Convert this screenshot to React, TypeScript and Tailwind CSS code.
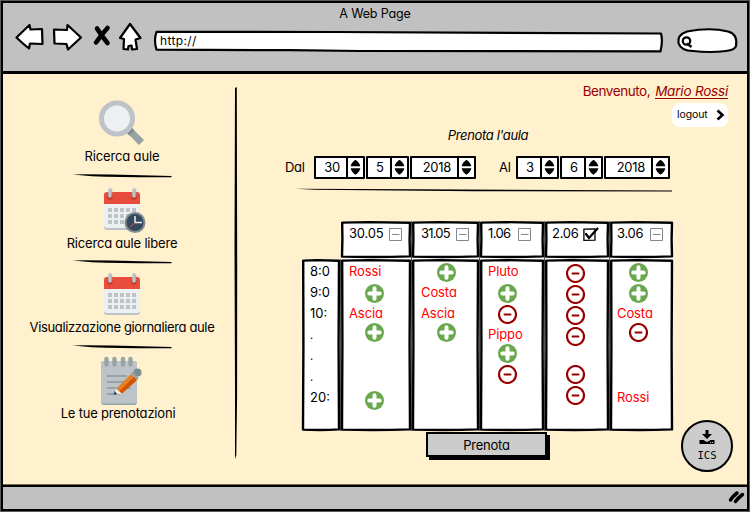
import type { ReactNode } from "react";

type Entry = "plus" | "minus" | string | null;

const cx = (...parts: (string | undefined)[]) => parts.filter(Boolean).join(" ");

/* Hand-drawn outline stretched over its parent box */
function Outline({ w, h }: { w: number; h: number }) {
  return (
    <svg className="pointer-events-none absolute inset-0 overflow-visible" width={w} height={h} viewBox={`0 0 ${w} ${h}`} fill="none">
      <path
        d={`M1.2 1.6 L${w * 0.4} 1.1 L${w - 1} 1.8 L${w - 1.4} ${h * 0.5} L${w - 1} ${h - 1.6} Q${w / 2} ${h - 0.4} 1 ${h - 1.4} L1.4 ${h * 0.5} Z`}
        stroke="#000"
        strokeWidth="2.4"
        strokeLinejoin="round"
      />
    </svg>
  );
}

function Plus() {
  return (
    <svg width="19" height="19" viewBox="0 0 19 19">
      <circle cx="9.5" cy="9.5" r="9.5" fill="#6aa84f" />
      <path d="M9.5 4.300V14.700M4.300 9.500H14.700" stroke="#fff" strokeWidth="4" strokeLinecap="round" />
    </svg>
  );
}

function Minus() {
  return (
    <svg width="19" height="19" viewBox="0 0 19 19">
      <circle cx="9.5" cy="9.5" r="8.5" fill="none" stroke="#990000" strokeWidth="2.200" />
      <path d="M6.500 9.600H12.500" stroke="#990000" strokeWidth="2" strokeLinecap="round" />
    </svg>
  );
}

function Toggle({ checked }: { checked?: boolean }) {
  if (checked)
    return (
      <svg className="overflow-visible" width="13" height="13" viewBox="0 0 13 13" fill="none" stroke="#000">
        <path d="M.9 1.2L12 .8V12.200L.9 12.400Z" strokeWidth="1.3" />
        <path d="M3 6L6 10L14.500 .5" strokeWidth="2.200" strokeLinecap="round" />
      </svg>
    );
  return (
    <svg width="13" height="13" viewBox="0 0 13 13" fill="none" stroke="#85858f">
      <path d="M.5 .5H12.500V12.500H.5ZM3 6.500H10.500" />
    </svg>
  );
}

function Spinner({ value, width, inner }: { value: string; width: string; inner?: string }) {
  return (
    <div className={cx("flex h-[23px] rounded-[1px] border-2 border-black bg-white", width)}>
      <div className="flex flex-1 items-center justify-end border-r-2 border-black pr-[6px] text-[13px]">
        <span className={inner}>{value}</span>
      </div>
      <svg className="mx-[2px] mt-px" width="11" height="17" viewBox="0 0 11 17">
        <path d="M5.500 .8C7 1.600 10 4.500 10.300 7.300H.7C1 4.500 4 1.600 5.500 .8ZM.7 9.300H10.300C10 12 7 15 5.500 15.800C4 15 1 12 .7 9.300Z" />
      </svg>
    </div>
  );
}

function Rule() {
  return (
    <svg className="shrink-0" width="100" height="6" viewBox="0 0 100 6">
      <path d="M.5 1.500Q10 1 50 1.800L99.500 3V4.200Q50 4.400 20 3.200Z" />
    </svg>
  );
}

function CalendarArt() {
  return (
    <>
      <path d="M104 7H140V39Q140 42 137 42H107Q104 42 104 39Z" fill="#bdc3c7" />
      <path d="M104 7H140V37Q140 40 137 40H107Q104 40 104 37Z" fill="#ecf0f1" />
      <path d="M104 16V7Q104 4 107 4H137Q140 4 140 7V16Z" fill="#e74c3c" />
      <circle cx="110" cy="9" r="2.700" fill="#c0392b" />
      <circle cx="134" cy="9" r="2.700" fill="#c0392b" />
      <path d="M110 1.800V8M134 1.800V8" stroke="#bdc3c7" strokeWidth="3.600" strokeLinecap="round" />
      <path d="M111.800 1.500V8M135.800 1.500V8" stroke="#95a5a6" strokeWidth=".7" />
      <path d="M108 22H137M108 28H137M108 34H137" stroke="#bdc3c7" strokeWidth="4" strokeDasharray="4 2" />
    </>
  );
}

function NavItem({ icon, children, className, label }: { icon: ReactNode; children: ReactNode; className: string; label: string }) {
  return (
    <div className={cx("flex w-full flex-col items-center", className)}>
      {icon}
      <span className={cx("h-4 whitespace-nowrap text-[13px] leading-4", label)}>{children}</span>
    </div>
  );
}

const days: { date: string; w: number; col: string; cell: string; icon: string; checked?: boolean; label: string; entries: [Entry, string?][] }[] = [
  {
    date: "30.05", w: 70, col: "w-[70px]", cell: "pl-[8px]", icon: "ml-[16px]", label: "w-[40px] tracking-[-0.2px]",
    entries: [["Rossi"], ["plus", "translate-y-px"], ["Ascia"], ["plus", "-translate-y-[2px]"], [null], [null], ["plus", "translate-y-[3px]"]],
  },
  {
    date: "31.05", w: 67, col: "w-[67px]", cell: "pl-[9px]", icon: "ml-[16px]", label: "w-[35px] tracking-[-0.8px]",
    entries: [["plus", "translate-y-px"], ["Costa"], ["Ascia"], ["plus", "-translate-y-[2px]"], [null], [null], [null]],
  },
  {
    date: "1.06", w: 64, col: "w-[64px]", cell: "pl-[8px]", icon: "ml-[10px]", label: "w-[30px] tracking-[-0.6px]",
    entries: [["Pluto"], ["plus", "translate-y-px"], ["minus", "translate-y-px"], ["Pippo"], ["plus", "-translate-y-[2px]"], ["minus", "-translate-y-[2px]"], [null]],
  },
  {
    date: "2.06", w: 64, col: "w-[64px]", cell: "pl-[7px]", icon: "ml-[14px]", checked: true, label: "w-[31px] tracking-[-0.3px]",
    entries: [["minus", "translate-y-[2px]"], ["minus", "translate-y-[2px]"], ["minus", "translate-y-[2px]"], ["minus", "translate-y-[2px]"], [null], ["minus", "-translate-y-[2px]"], ["minus", "-translate-y-[2px]"]],
  },
  {
    date: "3.06", w: 63, col: "w-[63px]", cell: "pl-[7px]", icon: "ml-[12px]", label: "w-[33px] tracking-[-0.3px]",
    entries: [["plus", "translate-y-px"], ["plus", "translate-y-px"], ["Costa"], ["minus", "-translate-y-[2px]"], [null], [null], ["Rossi"]],
  },
];

export default function App() {
  return (
    <div className="flex h-[512px] w-[750px] flex-col overflow-hidden bg-[#555b55] px-px pb-px pt-px text-black [font-family:Inter,'Liberation_Sans',sans-serif] [font-feature-settings:'cv11']">
      <div className="flex min-h-0 flex-1 flex-col border-2 border-black bg-[#fff0ce]">
        <header className="flex h-[71px] shrink-0 flex-col border-b-[3px] border-black bg-[#c1c1c1]">
          <div className="h-[19px] text-center text-[12.500px] leading-[21px] tracking-[-0.15px]">A Web Page</div>
          <div className="flex h-[36px] pl-[12px]">
            <svg width="130" height="36" viewBox="15 22 130 36" fill="#fff" stroke="#000" strokeWidth="2.200" strokeLinejoin="round">
              <path d="M16.500 37.500L29.500 25L30.500 29.500L42 29L42.500 44L30 43.500L29 48.500Q22 43 16.500 37.500Z" />
              <path d="M54 29.500L67 30L67.500 25L81 37.500L68 49.500L66.500 44L54.500 43.500Z" />
              <path d="M120 38L130 24L140.500 38L135.500 39.500L137 49L132 49.500L131.500 45.500L128.500 46L128 49.500L123.500 49L124 39Z" />
              <path d="M97 28.500Q101 35 107.500 43M107.500 28Q103 33 96 42.500" fill="none" strokeWidth="4.600" strokeLinecap="round" />
            </svg>
            <div className="relative ml-[9px] mt-[8px] flex h-[21px] w-[508px]">
              <svg className="absolute inset-0 overflow-visible" width="508" height="21" viewBox="154 30 508 21" fill="#fff" stroke="#000" strokeWidth="2.200" strokeLinejoin="round">
                <path d="M156.500 31.800L335 32L661 33.500Q663 41 660.500 51.300L360 51L290 50.200L156.500 49.700Q153.500 40 156.500 31.800Z" />
              </svg>
              <span className="relative pl-[6px] text-[12px] leading-[21px] tracking-[0.35px]">http://</span>
            </div>
            <svg className="ml-[13px]" width="66" height="36" viewBox="675 22 66 36" fill="#fff" stroke="#000" strokeWidth="2.200">
              <path d="M678.500 43Q677 35 687 31.500Q710 27 728 31.500Q738 34 736 46Q735 50 726 51Q710 53 693 51Q681 51 678.500 43Z" />
              <circle cx="686.500" cy="41" r="3.700" fill="none" />
              <path d="M687 43.500L691.500 47" strokeWidth="2.500" />
            </svg>
          </div>
        </header>

        <main className="relative flex min-h-0 flex-1 border-b border-[#7b6c46]">
          <aside className="flex w-[238px] shrink-0 flex-col items-center pt-[25px]">
            <NavItem
              className="h-[74px]"
              label="tracking-[-0.15px]"
              icon={
                <svg className="shrink-0" width="46" height="49" viewBox="99 100 46 49">
                  <path d="M129 131L141.500 143.500" stroke="#95a5a6" strokeWidth="7" />
                  <path d="M128 130L132 134" stroke="#7f8c8d" strokeWidth="7" />
                  <circle cx="117" cy="119.500" r="15.500" fill="#ecf0f1" stroke="#bdc3c7" strokeWidth="5" />
                </svg>
              }
            >
              Ricerca aule
            </NavItem>
            <Rule />
            <NavItem
              className="h-[80px] pt-[9px]"
              label="tracking-[-0.2px]"
              icon={
                <svg className="shrink-0" width="48" height="47" viewBox="98 0 48 47">
                  <CalendarArt />
                  <circle cx="135" cy="34.500" r="9.500" fill="#34495e" stroke="#7f8c8d" strokeWidth="2" />
                  <path d="M135 28V34.500H142" fill="none" stroke="#ecf0f1" strokeWidth="1.500" />
                  <path d="M135 34.500L130 39" stroke="#e74c3c" strokeWidth="1" />
                </svg>
              }
            >
              Ricerca aule libere
            </NavItem>
            <Rule />
            <NavItem
              className="h-[79px] pt-[8px]"
              label="tracking-[-0.36px]"
              icon={
                <svg className="shrink-0" width="48" height="46" viewBox="98 0 48 46">
                  <CalendarArt />
                </svg>
              }
            >
              Visualizzazione giornaliera aule
            </NavItem>
            <Rule />
            <NavItem
              className="pt-[5px]"
              label="-translate-x-[4px] tracking-[-0.2px]"
              icon={
                <svg className="shrink-0" width="46" height="50" viewBox="99 355 46 50">
                  <path d="M101 364V402Q101 405 104 405H134Q137 405 137 402V364Q137 361 134 361H104Q101 361 101 364Z" fill="#95a5a6" />
                  <path d="M101 364V401Q101 403.500 104 403.500H134Q137 403.500 137 401V364Q137 361 134 361H104Q101 361 101 364Z" fill="#bdc3c7" />
                  <path d="M106.500 359V364.500M114.500 359V364.500M123 359V364.500M130.500 359V364.500" stroke="#95a5a6" strokeWidth="4.400" strokeLinecap="round" />
                  <path d="M107 376H127M107 382H124M107 388H131M107 394H120" stroke="#95a5a6" strokeWidth="2" />
                  <path d="M117 388L131 374L137 380L122 393L115 394Z" fill="#e67e22" />
                  <path d="M119.500 391L134 377L137 380L122 393.500Z" fill="#d35400" />
                  <path d="M116 388.500L121.500 393.500L114 395Z" fill="#ecf0f1" />
                  <path d="M114.500 391L117.500 394.300L113.500 395Z" fill="#34495e" />
                  <circle cx="137.500" cy="372.500" r="4" fill="#7f8c8d" />
                  <path d="M131.500 372.500L138 379" stroke="#95a5a6" strokeWidth="2.500" />
                </svg>
              }
            >
              Le tue prenotazioni
            </NavItem>
          </aside>

          <svg className="-ml-[8px] mt-[13px] shrink-0" width="6" height="375" viewBox="0 0 6 375">
            <path d="M2 1L3.800 0L4.200 180L4.100 310L3.300 368L2 372L2 300L1.500 160Z" />
          </svg>

          <section className="flex min-w-0 flex-1 flex-col pl-[63px]">
            <div className="flex flex-col items-end pr-[19px] pt-[9px]">
              <div className="flex h-4 text-[13.500px] leading-4 tracking-[-0.2px] text-[#990000]">
                <span className="tracking-[-0.45px]">Benvenuto,</span>
                <span className="ml-[5px] h-[16px] border-b border-[#990000] italic">Mario Rossi</span>
              </div>
              <button className="mt-[4px] flex h-[24px] w-[56px] items-center rounded-lg bg-white pl-[5px] text-[10.500px] tracking-[-0.1px]">
                <span>logout</span>
                <svg className="ml-[8px]" width="9" height="12" viewBox="0 0 9 12" fill="none" stroke="#000" strokeWidth="2.600">
                  <path d="M1.500 1.500L6.500 6L1.500 10.500" />
                </svg>
              </button>
            </div>

            <h1 className="ml-[-7px] h-[15px] w-[386px] text-center text-[13px] italic leading-[17px] tracking-[-0.35px]">Prenota l&apos;aula</h1>

            <div className="-ml-[17px] mt-[14px] flex items-center">
              <span className="w-[29px] text-[13px] tracking-[-0.3px]">Dal</span>
              <div className="flex gap-px">
                <Spinner value="30" width="w-[51px]" inner="tracking-[-0.2px]" />
                <Spinner value="5" width="w-[43px]" />
                <Spinner value="2018" width="w-[66px]" inner="tracking-[-0.3px]" />
              </div>
              <span className="ml-[23px] w-[17px] text-[13px] tracking-[-0.3px]">Al</span>
              <div className="flex gap-px">
                <Spinner value="3" width="w-[43px]" />
                <Spinner value="6" width="w-[43px]" />
                <Spinner value="2018" width="w-[66px]" inner="tracking-[-0.3px]" />
              </div>
            </div>

            <svg className="-ml-[7px] mt-[8px]" width="378" height="6" viewBox="0 0 378 6">
              <path d="M0 1.800L120 2.200L377 3.400V4.600L180 4.200L20 2.800Z" />
            </svg>

            <div className="mt-[28px] flex">
              <div className="w-[39px]" />
              <div className="flex gap-px bg-[#555]">
                {days.map((d) => (
                  <div key={d.date} className={cx("relative h-[38px] bg-white", d.col)}>
                    <div className={cx("flex h-[24px] items-center pt-[2px] text-[13px]", d.cell)}>
                      <span className={cx("whitespace-nowrap", d.label)}>{d.date}</span>
                      <Toggle checked={d.checked} />
                    </div>
                    <Outline w={d.w} h={37} />
                  </div>
                ))}
              </div>
            </div>
            <div className="flex">
              <div className="flex gap-px bg-[#555]">
                <div className="relative h-[172px] w-[38px] bg-white pl-[8px] pt-[2px] text-[13px]">
                  {["8:0", "9:0", "10:", ".", ".", ".", "20:"].map((t, i) => (
                    <div key={i} className={t === "." ? "h-[21px] text-[11px] leading-[23px]" : "h-[21px] leading-[21px]"}>{t}</div>
                  ))}
                  <Outline w={38} h={172} />
                </div>
                {days.map((d) => (
                  <div key={d.date} className={cx("relative h-[172px] bg-white pt-[2px] text-[13px] tracking-[-0.1px] text-[#ff0000]", d.col, d.cell)}>
                    {d.entries.map(([e, shift], i) => (
                      <div key={i} className="flex h-[21px] items-center leading-[21px]">
                        {e === "plus" || e === "minus" ? <span className={cx(d.icon, shift)}>{e === "plus" ? <Plus /> : <Minus />}</span> : e}
                      </div>
                    ))}
                    <Outline w={d.w} h={172} />
                  </div>
                ))}
              </div>
            </div>
            <button className="ml-[124px] mt-px h-[25px] w-[121px] border-2 border-black bg-[#cccccc] text-[13px] leading-[23px] tracking-[-0.25px] shadow-[3px_3px_0_#000]">Prenota</button>
          </section>

          <button className="absolute bottom-[12px] right-[14px] flex size-[52px] flex-col items-center rounded-full border-2 border-black bg-[#cccccc] pt-[8px]">
            <svg width="16" height="15" viewBox="0 0 16 15">
              <path d="M6.500 0H9.500V4H13L8 9L3 4H6.500ZM.5 10H4.500L8 12L11.500 10H15.500V14H.5Z" />
              <path d="M11 12.500H14" stroke="#ccc" strokeWidth="1" strokeDasharray="1 1" />
            </svg>
            <span className="mt-[3px] text-[10.500px] leading-[14px] [font-family:'DejaVu_Sans_Mono',monospace]">ICS</span>
          </button>
        </main>

        <footer className="flex h-[24px] shrink-0 justify-end border-t-2 border-black bg-[#c1c1c1]">
          <svg width="20" height="20" viewBox="0 0 20 20" stroke="#000" strokeWidth="3.500" strokeLinecap="round" fill="none">
            <path d="M3.500 13Q6 9 10 6M8.500 14.500Q11 11 15.500 7.500" />
          </svg>
        </footer>
      </div>
    </div>
  );
}
